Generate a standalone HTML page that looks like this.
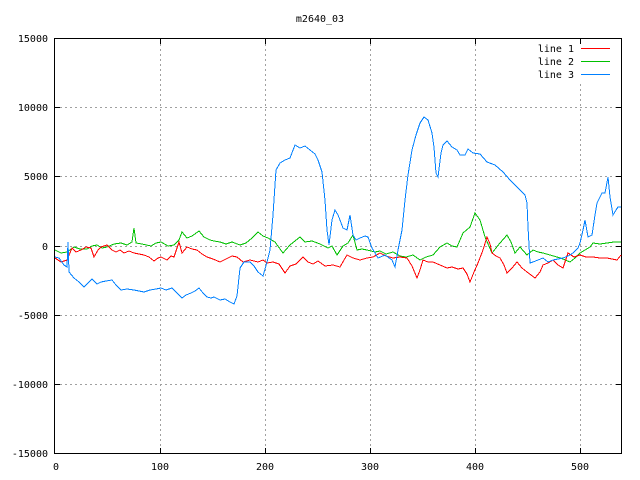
<!DOCTYPE html>
<html><head><meta charset="utf-8"><style>
html,body{margin:0;padding:0;background:#fff;width:640px;height:480px;overflow:hidden}
svg{display:block}
text{font-family:"DejaVu Sans Mono","Liberation Mono",monospace;font-size:10px;fill:#000}
</style></head><body>
<svg width="640" height="480" viewBox="0 0 640 480" xmlns="http://www.w3.org/2000/svg">
<rect width="640" height="480" fill="#fff"/>
<g stroke="#a0a0a0" stroke-width="1" stroke-dasharray="2,3" fill="none" shape-rendering="crispEdges">
<path d="M160.5 39V453M265.5 39V453M370.5 39V453M475.5 39V453M580.5 39V453"/>
<path d="M55 107.5H621M55 176.5H621M55 246.5H621M55 315.5H621M55 384.5H621"/>
</g>
<rect x="512" y="40" width="108" height="44" fill="#fff"/>
<rect x="54.5" y="38.5" width="567" height="415" fill="none" stroke="#000" stroke-width="1" shape-rendering="crispEdges"/>
<g stroke="#000" stroke-width="1" shape-rendering="crispEdges">
<path d="M55 107.5h5M55 176.5h5M55 246.5h5M55 315.5h5M55 384.5h5M616 107.5h5M616 176.5h5M616 246.5h5M616 315.5h5M616 384.5h5"/>
<path d="M160.5 453v-5M265.5 453v-5M370.5 453v-5M475.5 453v-5M580.5 453v-5M160.5 39v5M265.5 39v5M370.5 39v5M475.5 39v5M580.5 39v5"/>
</g>
<text x="320" y="22" text-anchor="middle">m2640_03</text>
<g text-anchor="end">
<text x="48" y="42">15000</text>
<text x="48" y="111">10000</text>
<text x="48" y="180">5000</text>
<text x="48" y="250">0</text>
<text x="48" y="319">-5000</text>
<text x="48" y="388">-10000</text>
<text x="48" y="457">-15000</text>
</g>
<g text-anchor="middle">
<text x="56" y="470">0</text>
<text x="160" y="470">100</text>
<text x="265" y="470">200</text>
<text x="370" y="470">300</text>
<text x="475" y="470">400</text>
<text x="580" y="470">500</text>
</g>
<g text-anchor="end">
<text x="574" y="52">line 1</text>
<text x="574" y="65">line 2</text>
<text x="574" y="78">line 3</text>
</g>
<g shape-rendering="crispEdges">
<path d="M581 48.5h29" stroke="#ff0000"/>
<path d="M581 61.5h29" stroke="#00c000"/>
<path d="M581 74.5h29" stroke="#0080ff"/>
</g>
<g fill="none" stroke-width="1" stroke-linejoin="miter" shape-rendering="crispEdges">
<polyline stroke="#00c000" points="55,250 61,253 67,252 74,247 80,249 87,249 92,246 97,245 102,248 107,247 114,244 121,243 127,245 132,242 134,228 136,243 142,244 151,246 156,243 161,242 168,246 174,245 179,240 182,232 187,238 192,236 199,231 204,237 210,240 214,241 220,242 226,244 232,242 240,245 246,243 252,238 258,232 263,236 268,238 275,242 283,253 290,245 300,237 305,242 312,241 320,244 328,248 332,246 337,255 343,246 348,243 353,235 357,250 362,249 367,250 375,252 380,251 386,254 393,252 400,256 406,257 413,255 420,260 426,257 433,255 440,247 447,243 452,246 457,247 463,233 470,227 475,213 480,220 485,237 492,253 500,243 507,235 511,242 515,253 520,247 527,255 533,250 538,252 543,253 550,255 557,257 563,259 570,262 575,258 580,253 585,250 590,247 593,243 600,244 607,243 614,242 621,242"/>
<polyline stroke="#ff0000" points="55,258 61,262 67,260 72,248 76,252 81,250 86,247 91,248 94,257 98,250 101,247 107,245 112,250 116,252 120,250 124,253 129,251 134,253 139,254 144,255 149,257 154,261 158,258 161,257 167,260 171,256 174,257 179,242 182,253 187,247 192,249 197,250 202,254 207,257 213,259 220,262 226,259 232,256 237,257 243,262 250,260 258,262 263,260 267,263 273,262 279,264 285,273 290,266 296,264 303,257 308,262 313,264 318,261 325,266 333,265 340,267 344,260 347,255 353,258 360,260 367,258 373,257 380,253 386,256 393,258 400,257 407,258 412,266 417,278 420,270 423,260 428,262 433,262 440,265 447,268 452,267 458,269 463,268 467,274 470,282 474,272 478,263 483,250 487,237 490,244 492,253 496,256 500,258 504,265 507,273 512,268 517,262 522,268 527,272 531,275 535,278 540,272 543,265 548,263 553,260 558,265 563,268 568,253 574,257 580,255 586,257 593,257 600,258 607,258 612,259 617,260 621,255"/>
<polyline stroke="#0080ff" points="55,257 59,258 64,265 67,267 68,242 69,272 74,278 79,282 84,287 88,283 92,279 97,284 101,282 106,281 112,280 116,285 121,290 127,289 134,290 139,291 144,292 150,290 156,289 161,288 166,290 172,288 177,293 182,298 186,295 191,293 195,291 199,288 203,293 207,297 211,298 214,297 220,300 225,299 230,302 234,304 237,296 240,268 244,262 250,262 254,266 258,272 263,276 267,262 270,250 273,215 276,170 280,163 285,160 290,158 295,145 300,148 305,146 310,150 315,154 318,160 322,172 325,200 327,230 329,245 332,220 335,210 338,215 340,220 343,228 347,230 350,215 353,235 356,240 360,238 365,236 368,237 372,248 378,258 385,255 392,260 395,267 398,250 402,230 405,200 408,175 412,150 416,135 420,123 424,117 428,120 432,133 434,147 436,173 438,177 441,153 443,145 447,141 452,147 457,150 460,155 465,155 468,149 473,153 480,154 487,162 495,165 503,172 510,180 517,187 522,192 525,195 527,203 528,227 530,263 533,262 538,260 543,258 548,262 553,260 558,259 563,258 568,256 573,253 578,248 580,243 583,230 585,220 588,237 592,235 595,215 597,203 602,193 605,193 608,177 610,197 613,215 616,210 618,207 621,207"/>
</g>
</svg>
</body></html>
